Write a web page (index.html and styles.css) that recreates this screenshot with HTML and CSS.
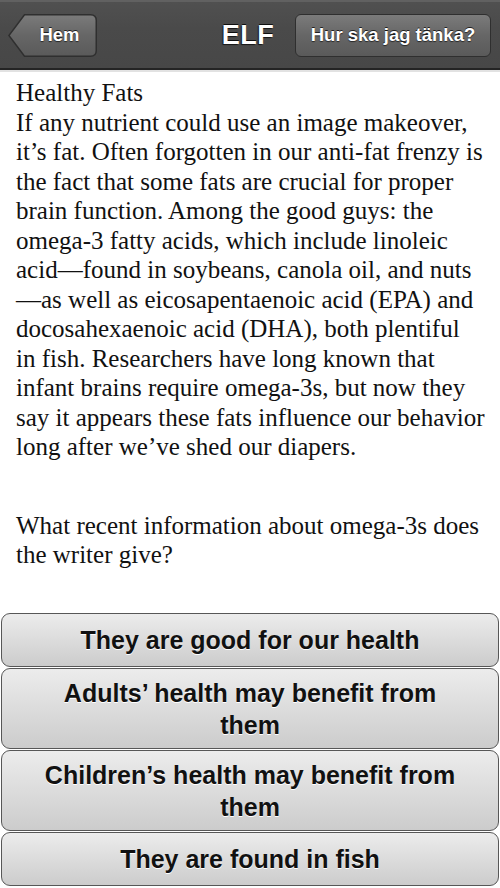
FILE: index.html
```html
<!DOCTYPE html>
<html>
<head>
<meta charset="utf-8">
<link rel="stylesheet" href="styles.css">
</head>
<body>
<div class="page">
  <header class="navbar">
    <button class="back-btn">
      <svg class="back-shape" viewBox="0 0 89 43" width="89" height="43" aria-hidden="true">
        <defs>
          <linearGradient id="bg" x1="0" y1="0" x2="0" y2="1">
            <stop offset="0" stop-color="#7b7b7b"/>
            <stop offset="0.5" stop-color="#666"/>
            <stop offset="1" stop-color="#5a5a5a"/>
          </linearGradient>
        </defs>
        <path d="M16.5 0.75 H82.5 Q88.25 0.75 88.25 6.5 V36.5 Q88.25 42.25 82.5 42.25 H16.5 L0.9 21.5 Z" fill="url(#bg)" stroke="#2f2f2f" stroke-width="1.5"/>
      </svg>
      <span class="back-label">Hem</span>
    </button>
    <h1 class="title">ELF</h1>
    <button class="nav-btn">Hur ska jag tänka?</button>
  </header>
  <main class="content">
    <p class="passage">Healthy Fats<br>If any nutrient could use an image makeover, it’s fat. Often forgotten in our anti-fat frenzy is the fact that some fats are crucial for proper brain function. Among the good guys: the omega-3 fatty acids, which include linoleic acid—found in soybeans, canola oil, and nuts—as well as eicosapentaenoic acid (EPA) and docosahexaenoic acid (DHA), both plentiful in&nbsp;fish. Researchers have long known that infant brains require omega-3s, but now they say it appears these fats influence our behavior long after we’ve shed our diapers.</p>
    <p class="question">What recent information about omega-3s does the writer give?</p>
  </main>
  <div class="answers">
    <button class="answer">They are good for our health</button>
    <button class="answer">Adults’ health may benefit from them</button>
    <button class="answer">Children’s health may benefit from them</button>
    <button class="answer">They are found in fish</button>
  </div>
</div>
</body>
</html>
```
FILE: styles.css
```css
* { box-sizing: border-box; }
html, body { margin: 0; padding: 0; background: #fff; }
body { width: 500px; height: 888px; overflow: hidden; }

.page {
  display: flex;
  flex-direction: column;
  height: 888px;
}

.navbar {
  display: grid;
  grid-template-columns: minmax(0, 1fr) auto minmax(0, 1fr);
  align-items: center;
  height: 70px;
  padding: 0 9px 0 8px;
  background: linear-gradient(#505050, #4a4a4a 40%, #474747);
  border-top: 2px solid #616161;
  border-bottom: 2px solid #242424;
  box-shadow: 0 2px 0 #e2e2e2;
  flex: none;
  font-family: "Liberation Sans", Arial, sans-serif;
  font-weight: bold;
  color: #fff;
}

.back-btn {
  position: relative;
  justify-self: start;
  width: 89px;
  height: 43px;
  padding: 0 0 0 14px;
  border: 0;
  background: none;
  font: inherit;
  font-size: 18.5px;
  color: #fff;
  text-shadow: 0 -1px 0 rgba(0,0,0,0.7), 0 1px 1px rgba(0,0,0,0.6);
}
.back-shape { position: absolute; left: 0; top: 0; }
.back-label { position: relative; }

.title {
  margin: 0 3px 0 0;
  font-size: 27px;
  font-weight: bold;
  letter-spacing: 0.5px;
  text-shadow: 0 -1px 0 rgba(0,0,0,0.8), -1px 1px 1px rgba(0,0,0,0.7);
}

.nav-btn {
  justify-self: end;
  width: 196px;
  height: 43px;
  padding: 0;
  border: 1.5px solid #2f2f2f;
  border-radius: 6px;
  background: linear-gradient(#7b7b7b, #666 50%, #5a5a5a);
  font: inherit;
  font-size: 18.5px;
  color: #fff;
  text-shadow: 0 -1px 0 rgba(0,0,0,0.7), 0 1px 1px rgba(0,0,0,0.6);
}

.content {
  padding: 8px 11px 0 16px;
  font-family: "Liberation Serif", "Times New Roman", serif;
  font-size: 25px;
  line-height: 29.5px;
  color: #111;
}
.passage { margin: 0; }
.question { margin: 49px 0 0; }

.answers {
  margin-top: auto;
  display: flex;
  flex-direction: column;
  gap: 1px;
  padding: 0 1px 2px;
}

.answer {
  display: flex;
  align-items: center;
  justify-content: center;
  width: 100%;
  min-height: 54px;
  padding: 7.5px 36px;
  border: 1.5px solid #575757;
  border-radius: 9px;
  background: linear-gradient(#ececec, #dcdcdc 50%, #cccccc);
  font-family: "Liberation Sans", Arial, sans-serif;
  font-weight: bold;
  font-size: 25px;
  line-height: 32px;
  color: #111;
  text-shadow: 0 1px 0 #fff;
  text-align: center;
}
```
